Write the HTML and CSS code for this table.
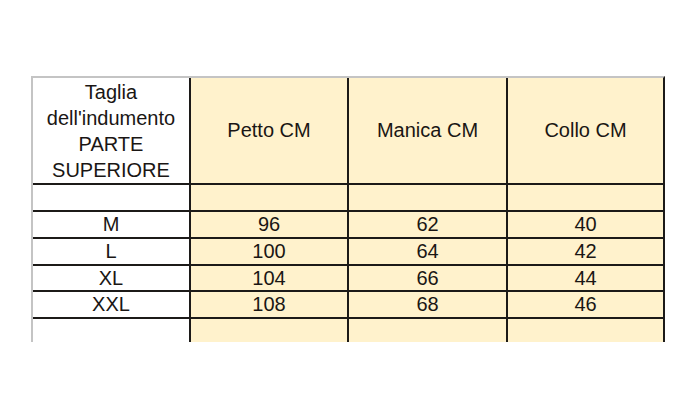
FILE: index.html
```html
<!DOCTYPE html>
<html>
<head>
<meta charset="utf-8">
<link rel="stylesheet" href="styles.css">
</head>
<body>
<div class="sheet">
  <div class="cell head label">Taglia<br>dell'indumento<br>PARTE<br>SUPERIORE</div>
  <div class="cell head fill">Petto CM</div>
  <div class="cell head fill">Manica CM</div>
  <div class="cell head fill">Collo CM</div>

  <div class="cell"></div>
  <div class="cell fill"></div>
  <div class="cell fill"></div>
  <div class="cell fill"></div>

  <div class="cell">M</div>
  <div class="cell fill">96</div>
  <div class="cell fill">62</div>
  <div class="cell fill">40</div>

  <div class="cell">L</div>
  <div class="cell fill">100</div>
  <div class="cell fill">64</div>
  <div class="cell fill">42</div>

  <div class="cell">XL</div>
  <div class="cell fill">104</div>
  <div class="cell fill">66</div>
  <div class="cell fill">44</div>

  <div class="cell">XXL</div>
  <div class="cell fill">108</div>
  <div class="cell fill">68</div>
  <div class="cell fill">46</div>

  <div class="cell"></div>
  <div class="cell fill"></div>
  <div class="cell fill"></div>
  <div class="cell fill"></div>
</div>
</body>
</html>
```

FILE: styles.css
```css
html, body {
  margin: 0;
  padding: 0;
  background: #ffffff;
}

body {
  width: 700px;
  height: 420px;
  overflow: hidden;
  font-family: "Liberation Sans", Arial, sans-serif;
}

.sheet {
  margin: 76px 0 0 31px;
  width: 630px;
  display: grid;
  grid-template-columns: 156px 156px 157px 155px;
  grid-template-rows: 105px 25px 25px 25px 24px 25px 23px;
  gap: 2px;
  background: #1c1a18;
  border-top: 2px solid #c4c4c4;
  border-left: 2px solid #c4c4c4;
  border-right: 2px solid #1c1a18;
}

.cell {
  background: #ffffff;
  color: #1a1614;
  font-size: 20px;
  line-height: 25px;
  text-align: center;
  display: flex;
  align-items: center;
  justify-content: center;
  overflow: hidden;
}

.fill {
  background: #fff2cc;
}

.head.label {
  line-height: 26px;
  padding-top: 1px;
}
```
